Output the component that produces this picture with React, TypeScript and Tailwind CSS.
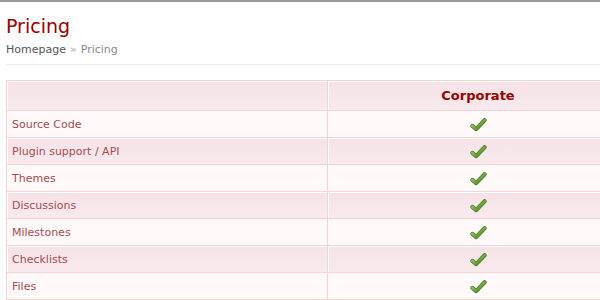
import React from 'react';

const features = [
  'Source Code',
  'Plugin support / API',
  'Themes',
  'Discussions',
  'Milestones',
  'Checklists',
  'Files',
];

const Check: React.FC = () => (
  <svg width="17" height="15" viewBox="0 0 18 16" className="inline-block">
    <defs>
      <linearGradient id="chk" x1="0" y1="0" x2="1" y2="1">
        <stop offset="0" stopColor="#b4dc8a" />
        <stop offset="0.5" stopColor="#76aa44" />
        <stop offset="1" stopColor="#3f6e1c" />
      </linearGradient>
    </defs>
    <path
      d="M2.5 9.5 L6.5 13 L15.5 3.5"
      fill="none"
      stroke="#4f7f2a"
      strokeWidth="4.4"
      strokeLinecap="round"
      strokeLinejoin="round"
    />
    <path
      d="M2.5 9.5 L6.5 13 L15.5 3.5"
      fill="none"
      stroke="url(#chk)"
      strokeWidth="2.8"
      strokeLinecap="round"
      strokeLinejoin="round"
    />
  </svg>
);

const App: React.FC = () => {
  return (
    <div className="w-[600px] h-[300px] overflow-hidden bg-white border-t-2 border-[#9c9c9c] font-['DejaVu_Sans',Verdana,sans-serif]">
      {/* Heading */}
      <div className="pl-[6px] pt-[12px]">
        <h1 className="text-[19px] leading-[24px] text-[#990000]">Pricing</h1>
        <div className="mt-[5px] text-[11px] leading-[14px]">
          <span className="text-[#555]">Homepage</span>
          <span className="text-[#b0b0b0] mx-[4px]">»</span>
          <span className="text-[#888]">Pricing</span>
        </div>
      </div>
      <div className="ml-[5px] mt-[7px] h-px bg-[#ececec]" />

      {/* Pricing table */}
      <div className="ml-[6px] mt-[15px] w-[640px] border border-[#f6d3d3]">
        <div className="flex h-[30px] bg-gradient-to-b from-[#f6e2e6] to-[#f8eaed] border-b border-[#f6d3d3]">
          <div className="w-[321px] border-r border-[#f6d3d3] shadow-[inset_1px_1px_0_#fff]" />
          <div className="w-[300px] flex items-center justify-center shadow-[inset_1px_1px_0_#fff] text-[13px] font-bold text-[#990000]">
            Corporate
          </div>
          <div className="flex-1 shadow-[inset_0_1px_0_#fff]" />
        </div>
        {features.map((f, i) => {
          const shaded = i % 2 === 1;
          return (
            <div
              key={f}
              className={`flex h-[27px] border-b border-[#f6d3d3] ${
                shaded ? 'bg-gradient-to-b from-[#f6e2e6] to-[#f8eaed]' : 'bg-[#fff9fa]'
              }`}
            >
              <div
                className={`w-[321px] flex items-center pl-[5px] pt-[2px] border-r border-[#f6d3d3] text-[11px] text-[#a34c55] ${
                  shaded ? 'shadow-[inset_1px_1px_0_#fff]' : ''
                }`}
              >
                {f}
              </div>
              <div
                className={`w-[300px] flex items-center justify-center pt-[1px] ${
                  shaded ? 'shadow-[inset_1px_1px_0_#fff]' : ''
                }`}
              >
                <Check />
              </div>
              <div className="flex-1" />
            </div>
          );
        })}
      </div>
    </div>
  );
};

export default App;
